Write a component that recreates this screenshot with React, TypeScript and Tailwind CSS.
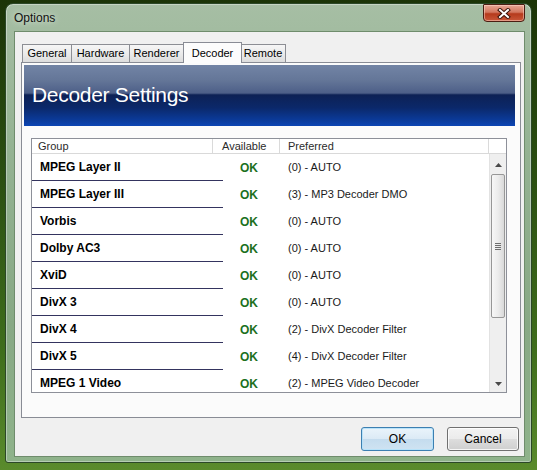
import React from "react";

const rows: [string, string][] = [
  ["MPEG Layer II", "(0) - AUTO"],
  ["MPEG Layer III", "(3) - MP3 Decoder DMO"],
  ["Vorbis", "(0) - AUTO"],
  ["Dolby AC3", "(0) - AUTO"],
  ["XviD", "(0) - AUTO"],
  ["DivX 3", "(0) - AUTO"],
  ["DivX 4", "(2) - DivX Decoder Filter"],
  ["DivX 5", "(4) - DivX Decoder Filter"],
  ["MPEG 1 Video", "(2) - MPEG Video Decoder"],
];

function Tab({ label, w, selected }: { label: string; w: string; selected?: boolean }) {
  if (selected) {
    return (
      <div
        className={`${w} h-[21px] -mb-px relative z-10 -mx-px border border-b-0 border-[#898c95] bg-[#fcfcfc] flex items-start justify-center pt-[2px] text-[11px] text-black`}
      >
        {label}
      </div>
    );
  }
  return (
    <div
      className={`${w} h-[18px] border border-b-0 border-[#8c8e94] -ml-px first:ml-0 bg-[linear-gradient(180deg,#f6f6f6_0%,#ebebeb_50%,#dddddd_100%)] flex items-center justify-center text-[11px] text-black`}
    >
      {label}
    </div>
  );
}

export default function App() {
  return (
    <div
      className="w-[537px] h-[470px] overflow-hidden pl-[5px] pt-[3px] bg-[linear-gradient(180deg,#1b3407_0%,#2c5112_40%,#3f6e1c_75%,#5a8b2c_100%)]"
      style={{ fontFamily: '"Liberation Sans", Arial, sans-serif' }}
    >
      {/* window */}
      <div className="w-[527px] h-[460px] rounded-t-[8px] rounded-b-[3px] border border-[#2b4827] bg-[linear-gradient(180deg,#a6bea4_0%,#95b393_30%,#88a985_70%,#8fb38b_100%)] shadow-[inset_0_0_0_1px_rgba(255,255,255,0.35)] flex flex-col">
        {/* title bar */}
        <div className="h-[27px] flex justify-between pl-[8px] pr-[6px]">
          <div className="self-center text-[12px] text-[#111] pt-[1px] [text-shadow:0_0_6px_rgba(255,255,255,0.8)]">
            Options
          </div>
          <div className="w-[42px] h-[18px] rounded-b-[4px] rounded-t-[1px] border border-[#4a1d12] bg-[linear-gradient(180deg,#e7a795_0%,#d3775f_45%,#b53a1c_55%,#c9583a_100%)] shadow-[inset_0_0_0_1px_rgba(255,220,210,0.5)] flex items-center justify-center">
            <svg width="14" height="11" viewBox="0 0 14 11">
              <path d="M3 2 L11 9 M11 2 L3 9" stroke="#3a1208" strokeWidth="4" strokeLinecap="square" />
              <path d="M3 2 L11 9 M11 2 L3 9" stroke="#ffffff" strokeWidth="2" strokeLinecap="square" />
            </svg>
          </div>
        </div>

        {/* client area */}
        <div className="ml-[8px] w-[511px] h-[426px] border border-[#6f8c6c] bg-[#f0f0f0] flex flex-col">
          {/* tabs */}
          <div className="mt-[10px] ml-[7px] h-[20px] flex items-end">
            <Tab label="General" w="w-[50px]" />
            <Tab label="Hardware" w="w-[59px]" />
            <Tab label="Renderer" w="w-[55px]" />
            <Tab label="Decoder" w="w-[59px]" selected />
            <Tab label="Remote" w="w-[46px]" />
          </div>

          {/* tab panel */}
          <div className="ml-[6px] w-[500px] h-[356px] border border-[#898c95] bg-[#fbfbfb] flex flex-col">
            {/* banner */}
            <div className="mt-[2px] ml-[2px] w-[491px] h-[61px] bg-[linear-gradient(180deg,#7284a5_0%,#647698_25%,#4d5f88_46%,#0d2155_49%,#0b286a_70%,#0b3c9e_92%,#0c45b4_100%)] flex items-center pl-[8px]">
              <span className="text-[21px] text-white tracking-[-0.3px] pb-[1px]">Decoder Settings</span>
            </div>

            {/* list */}
            <div className="mt-[12px] ml-[9px] w-[476px] h-[255px] border border-[#8d9099] bg-white flex flex-col">
              {/* header */}
              <div className="h-[15px] flex border-b border-[#d9d9d9] text-[11px] text-[#2b2b2b] leading-[14px]">
                <div className="w-[181px] border-r border-[#dadada] pl-[6px]">Group</div>
                <div className="w-[67px] border-r border-[#dadada] pl-[9px]">Available</div>
                <div className="w-[209px] border-r border-[#dadada] pl-[8px]">Preferred</div>
                <div className="flex-1" />
              </div>
              {/* body */}
              <div className="flex flex-1 min-h-0">
                <div className="flex-1 overflow-hidden">
                  {rows.map(([g, p]) => (
                    <div key={g} className="h-[27px] flex items-stretch">
                      <div className="w-[191px] border-b border-[#34345f] pl-[8px] flex items-center text-[12px] font-bold text-black">
                        {g}
                      </div>
                      <div className="w-[65px] pl-[17px] flex items-center text-[12px] font-bold text-[#1d701d]">
                        OK
                      </div>
                      <div className="flex-1 flex items-center text-[11px] text-[#1a1a1a]">{p}</div>
                    </div>
                  ))}
                </div>
                {/* scrollbar */}
                <div className="w-[17px] flex flex-col bg-[#efefef] border-l border-[#e2e2e2]">
                  <div className="h-[19px] flex items-center justify-center pt-[2px]">
                    <svg width="7" height="4" viewBox="0 0 7 4">
                      <path d="M0 4 L3.5 0 L7 4 Z" fill="#4a4a4a" />
                    </svg>
                  </div>
                  <div className="mt-[1px] mx-[1px] h-[144px] rounded-[2px] border border-[#979797] bg-[linear-gradient(90deg,#f7f7f7_0%,#ececec_50%,#d9d9d9_100%)] flex items-center justify-center">
                    <div className="flex flex-col gap-[1px]">
                      <div className="w-[6px] h-px bg-[#6e6e6e]" />
                      <div className="w-[6px] h-px bg-[#6e6e6e]" />
                      <div className="w-[6px] h-px bg-[#6e6e6e]" />
                      <div className="w-[6px] h-px bg-[#6e6e6e]" />
                    </div>
                  </div>
                  <div className="flex-1" />
                  <div className="h-[17px] flex items-center justify-center">
                    <svg width="7" height="4" viewBox="0 0 7 4">
                      <path d="M0 0 L3.5 4 L7 0 Z" fill="#4a4a4a" />
                    </svg>
                  </div>
                </div>
              </div>
            </div>
          </div>

          {/* buttons */}
          <div className="mt-[9px] flex justify-end gap-[13px] pr-[5px]">
            <div className="w-[73px] h-[24px] rounded-[3px] border border-[#3c7fb1] bg-[linear-gradient(180deg,#eaf4fb_0%,#dbeaf5_50%,#c4dcee_51%,#cfe3f2_100%)] shadow-[inset_0_0_0_1px_rgba(180,225,250,0.9)] flex items-center justify-center text-[12px] text-black">
              OK
            </div>
            <div className="w-[72px] h-[24px] rounded-[3px] border border-[#707070] bg-[linear-gradient(180deg,#f3f3f3_0%,#ebebeb_50%,#dddddd_51%,#cfcfcf_100%)] shadow-[inset_0_0_0_1px_rgba(255,255,255,0.8)] flex items-center justify-center text-[12px] text-black">
              Cancel
            </div>
          </div>
        </div>
      </div>
    </div>
  );
}
